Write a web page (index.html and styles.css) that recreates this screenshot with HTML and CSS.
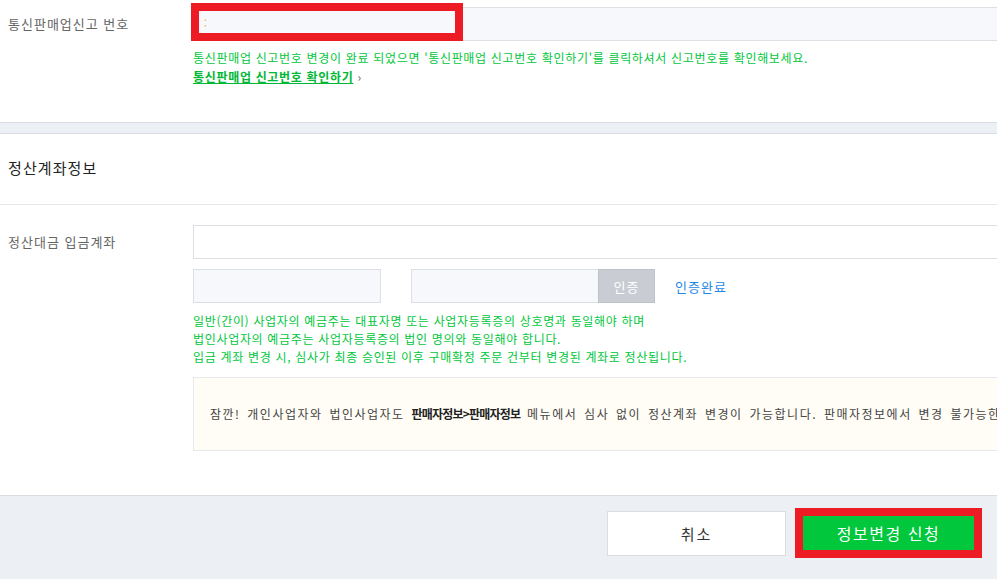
FILE: index.html
```html
<!DOCTYPE html>
<html lang="ko">
<head>
<meta charset="utf-8">
<title>판매자 정보 변경</title>
<link rel="stylesheet" href="styles.css">
</head>
<body>
<div class="page">
  <section class="block block-top">
    <div class="form-row">
      <div class="label">통신판매업신고 번호</div>
      <div class="field">
        <div class="input-wrap">
          <div class="input input-gray"><span class="caret">:</span></div>
          <div class="highlight highlight-input"></div>
        </div>
        <p class="help help-first">통신판매업 신고번호 변경이 완료 되었으면 '통신판매업 신고번호 확인하기'를 클릭하셔서 신고번호를 확인해보세요.</p>
        <p class="help"><a class="help-link" href="#">통신판매업 신고번호 확인하기</a> <span class="arrow">›</span></p>
      </div>
    </div>
  </section>

  <div class="divider"></div>

  <section class="block">
    <h2 class="section-title">정산계좌정보</h2>
    <div class="form-row form-row-account">
      <div class="label">정산대금 입금계좌</div>
      <div class="field">
        <div class="input input-white"></div>
        <div class="verify-row">
          <div class="input input-gray input-short"></div>
          <div class="verify-group">
            <div class="input input-gray input-short2"></div>
            <button class="btn-verify" type="button">인증</button>
          </div>
          <span class="verified">인증완료</span>
        </div>
        <div class="help-list">
          <p class="help">일반(간이) 사업자의 예금주는 대표자명 또는 사업자등록증의 상호명과 동일해야 하며</p>
          <p class="help">법인사업자의 예금주는 사업자등록증의 법인 명의와 동일해야 합니다.</p>
          <p class="help">입금 계좌 변경 시, 심사가 최종 승인된 이후 구매확정 주문 건부터 변경된 계좌로 정산됩니다.</p>
        </div>
        <div class="notice">잠깐! 개인사업자와 법인사업자도 <b>판매자정보&gt;판매자정보</b> 메뉴에서 심사 없이 정산계좌 변경이 가능합니다. 판매자정보에서 변경 불가능한 경우에만 정산계좌 변경 신청을 해주세요.</div>
      </div>
    </div>
  </section>

  <footer class="footer">
    <button class="btn btn-cancel" type="button">취소</button>
    <div class="highlight-btn">
      <button class="btn btn-submit" type="button">정보변경 신청</button>
    </div>
  </footer>
</div>
</body>
</html>
```

FILE: styles.css
```css
* { box-sizing: border-box; }

html, body {
  margin: 0;
  padding: 0;
  background: #ffffff;
  overflow: hidden;
}

body {
  font-family: "Noto Sans CJK KR", "Noto Sans", "Liberation Sans", sans-serif;
  color: #333;
  width: 997px;
  height: 579px;
}

.page {
  width: 997px;
  height: 579px;
  display: flex;
  flex-direction: column;
  overflow: hidden;
}

.block { background: #fff; }

.block-top {
  padding-top: 7px;
  padding-bottom: 36px;
}

.form-row {
  display: flex;
  align-items: flex-start;
}

.label {
  width: 193px;
  flex: 0 0 193px;
  padding-left: 8px;
  font-size: 13px;
  letter-spacing: 1px;
  line-height: 34px;
  color: #666;
  white-space: nowrap;
}

.field {
  flex: 0 0 900px;
  width: 900px;
}

.input-wrap { position: relative; }

.input {
  height: 34px;
  border: 1px solid #dcdfe4;
}

.input-gray { background: #f7f8fb; }
.input-white { background: #fff; }

.caret {
  display: block;
  padding-left: 10px;
  font-size: 10px;
  line-height: 30px;
  color: #f0a44a;
}

.highlight {
  position: absolute;
  border: 8px solid #ed1c24;
  pointer-events: none;
}

.highlight-input {
  left: -2px;
  top: -4px;
  width: 272px;
  height: 38px;
}

.help {
  margin: 0;
  font-size: 12px;
  letter-spacing: 0.68px;
  line-height: 19px;
  color: #00c73c;
  white-space: nowrap;
}

.help-first { margin-top: 7px; }

.help-link {
  color: #00b836;
  font-weight: bold;
  text-decoration: underline;
}

.arrow { color: #666; }

.divider {
  height: 12px;
  flex: 0 0 12px;
  background: #eceff4;
  border-top: 1px solid #d9dce1;
  border-bottom: 1px solid #d9dce1;
}

.section-title {
  margin: 0;
  height: 71px;
  padding-left: 8px;
  font-size: 15px;
  letter-spacing: 1.1px;
  font-weight: normal;
  line-height: 68px;
  color: #222;
  border-bottom: 1px solid #e3e6ea;
}

.form-row-account {
  padding-top: 20px;
  padding-bottom: 44px;
}

.verify-row {
  display: flex;
  align-items: center;
  margin-top: 10px;
}

.input-short { width: 188px; }

.verify-group {
  display: flex;
  margin-left: 30px;
}

.input-short2 { width: 188px; }

.btn-verify {
  width: 57px;
  height: 34px;
  margin-left: -1px;
  border: 1px solid #bfc3ca;
  background: #c9ccd3;
  color: #fff;
  font-family: inherit;
  font-size: 13px;
  letter-spacing: 1px;
  padding: 0;
}

.verified {
  margin-left: 20px;
  font-size: 13px;
  letter-spacing: 1px;
  color: #1f87e6;
}

.help-list { margin-top: 9px; }

.help-list .help { line-height: 18px; }

.notice {
  margin-top: 11px;
  height: 74px;
  border: 1px solid #e6e8eb;
  background: #fffdf5;
  padding-left: 16px;
  font-size: 12px;
  letter-spacing: 1.5px;
  word-spacing: 2px;
  line-height: 72px;
  color: #444;
  white-space: nowrap;
  overflow: hidden;
}

.notice b { color: #222; letter-spacing: -0.8px; word-spacing: 0; }

.footer {
  flex: 1;
  background: #eceff4;
  border-top: 1px solid #d9dce1;
  display: flex;
  justify-content: flex-end;
  align-items: flex-start;
  padding: 12px 15px 0 0;
  gap: 9px;
}

.btn {
  font-family: inherit;
  padding: 0;
  cursor: pointer;
}

.btn-cancel {
  margin-top: 3px;
  width: 179px;
  height: 45px;
  background: #fff;
  border: 1px solid #d9dce1;
  color: #333;
  font-size: 15px;
  letter-spacing: 2px;
}

.highlight-btn {
  border: 8px solid #ed1c24;
  width: 187px;
  height: 50px;
}

.btn-submit {
  display: block;
  width: 100%;
  height: 100%;
  border: 0;
  background: #00c73c;
  color: #fff;
  font-size: 16px;
  letter-spacing: 1.5px;
}
```
